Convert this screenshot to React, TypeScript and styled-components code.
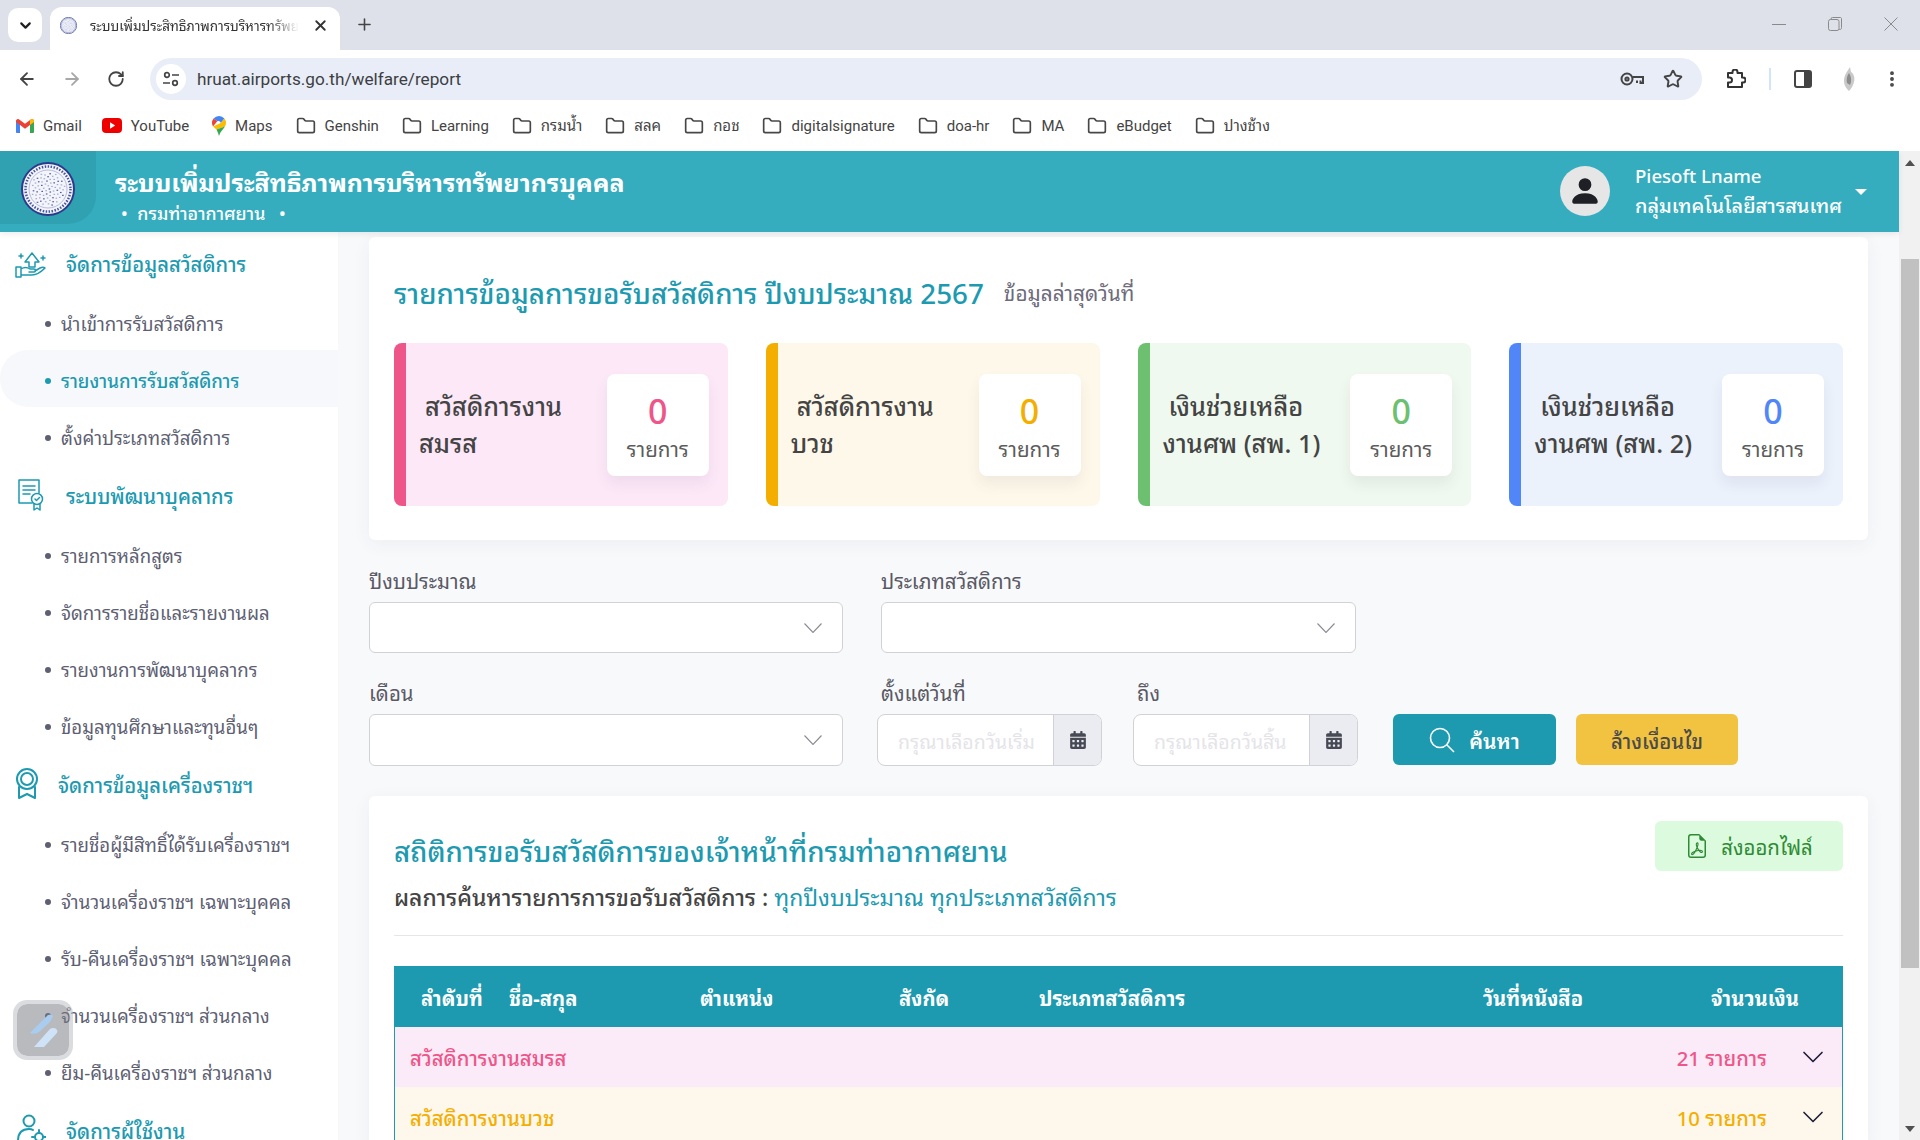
import React from 'react';
import styled, { createGlobalStyle } from 'styled-components';
import { ArrowLeft, ArrowRight, RotateCw, Star, MoreVertical, ChevronDown, X, Plus, Folder } from 'lucide-react';
import { FaCalendarAlt } from 'react-icons/fa';
import { BsPersonFill, BsFileEarmarkPdf } from 'react-icons/bs';

const TEAL = '#1d9ab0';
const FONT = '"Noto Sans", "Noto Sans Thai Looped", "Open Sans", sans-serif';

const GlobalStyle = createGlobalStyle`
  * { box-sizing: border-box; }
  html, body { margin: 0; padding: 0; height: 100%; overflow: hidden; background: #fff; }
  body { font-family: ${FONT}; color: #4b4b4b; }
`;

const bookmarks = [
  { icon: 'gmail', label: 'Gmail' },
  { icon: 'youtube', label: 'YouTube' },
  { icon: 'maps', label: 'Maps' },
  { icon: 'folder', label: 'Genshin' },
  { icon: 'folder', label: 'Learning' },
  { icon: 'folder', label: 'กรมน้ำ' },
  { icon: 'folder', label: 'สลค' },
  { icon: 'folder', label: 'กอช' },
  { icon: 'folder', label: 'digitalsignature' },
  { icon: 'folder', label: 'doa-hr' },
  { icon: 'folder', label: 'MA' },
  { icon: 'folder', label: 'eBudget' },
  { icon: 'folder', label: 'ปางช้าง' },
];

const menu = [
  {
    title: 'จัดการข้อมูลสวัสดิการ',
    icon: 'welfare',
    items: ['นำเข้าการรับสวัสดิการ', 'รายงานการรับสวัสดิการ', 'ตั้งค่าประเภทสวัสดิการ'],
  },
  {
    title: 'ระบบพัฒนาบุคลากร',
    icon: 'course',
    items: ['รายการหลักสูตร', 'จัดการรายชื่อและรายงานผล', 'รายงานการพัฒนาบุคลากร', 'ข้อมูลทุนศึกษาและทุนอื่นๆ'],
  },
  {
    title: 'จัดการข้อมูลเครื่องราชฯ',
    icon: 'medal',
    items: [
      'รายชื่อผู้มีสิทธิ์ได้รับเครื่องราชฯ',
      'จำนวนเครื่องราชฯ เฉพาะบุคคล',
      'รับ-คืนเครื่องราชฯ เฉพาะบุคคล',
      'จำนวนเครื่องราชฯ ส่วนกลาง',
      'ยืม-คืนเครื่องราชฯ ส่วนกลาง',
    ],
  },
  { title: 'จัดการผู้ใช้งาน', icon: 'users', items: [] },
];

const stats = [
  { first: 'สวัสดิการงาน', second: 'สมรส', bar: '#ee5588', bg: '#fde8f8' },
  { first: 'สวัสดิการงาน', second: 'บวช', bar: '#f4ae00', bg: '#fef8ea' },
  { first: 'เงินช่วยเหลือ', second: 'งานศพ (สพ. 1)', bar: '#6cc070', bg: '#eff9ef' },
  { first: 'เงินช่วยเหลือ', second: 'งานศพ (สพ. 2)', bar: '#5086f8', bg: '#ebf2fc' },
];

const columns = ['ลำดับที่', 'ชื่อ-สกุล', 'ตำแหน่ง', 'สังกัด', 'ประเภทสวัสดิการ', 'วันที่หนังสือ', 'จำนวนเงิน'];

const groups = [
  { label: 'สวัสดิการงานสมรส', count: 21, color: '#ee5588', bg: '#fbeaf7' },
  { label: 'สวัสดิการงานบวช', count: 10, color: '#f4ae00', bg: '#fef8ec' },
];

// speckles that stand for the engraving inside the department seal
const speckles = Array.from({ length: 70 }, (_, i) => {
  const angle = i * 2.4;
  const radius = 17 * Math.sqrt((i + 0.5) / 70);
  return { x: 27 + radius * Math.cos(angle), y: 27 + radius * Math.sin(angle), dark: i % 3 === 0 };
});

const Seal: React.FC<{ size: number }> = ({ size }) => (
  <svg width={size} height={size} viewBox="0 0 54 54">
    <circle cx="27" cy="27" r="26" fill="#f4f5fb" stroke="#2c3a8c" strokeWidth="2" />
    <circle cx="27" cy="27" r="22.5" fill="none" stroke="#47549e" strokeWidth="2.5" strokeDasharray="1.5 1.5" />
    <circle cx="27" cy="27" r="19" fill="none" stroke="#9aa2cf" strokeWidth="0.7" />
    {speckles.map((s, i) => (
      <rect key={i} x={s.x - 0.8} y={s.y - 0.6} width="1.6" height="1.2" fill={s.dark ? '#515ca3' : '#a3aad2'} />
    ))}
  </svg>
);

const BookmarkIcon: React.FC<{ kind: string }> = ({ kind }) => {
  if (kind === 'gmail') {
    return (
      <svg width="18" height="14" viewBox="0 0 18 14">
        <path d="M0 2v10.5C0 13.3.7 14 1.5 14H4V6l5 3.8L14 6v8h2.5c.8 0 1.5-.7 1.5-1.5V2c0-1.7-1.9-2.6-3.2-1.6L9 4.8 3.2.4C1.9-.6 0 .3 0 2z" fill="#ea4335" />
        <path d="M0 2v10.5C0 13.3.7 14 1.5 14H4V6L0 3z" fill="#4285f4" />
        <path d="M14 6v8h2.5c.8 0 1.5-.7 1.5-1.5V3z" fill="#34a853" />
        <path d="M14 1l0 5 4-3V2c0-1.7-1.9-2.6-3.2-1.6z" fill="#fbbc04" />
      </svg>
    );
  }
  if (kind === 'youtube') {
    return (
      <svg width="20" height="15" viewBox="0 0 20 15">
        <rect width="20" height="15" rx="4" fill="#ee0000" />
        <path d="M8 4.2l5.2 3.3L8 10.8z" fill="#fff" />
      </svg>
    );
  }
  if (kind === 'maps') {
    return (
      <svg width="14" height="20" viewBox="0 0 14 20">
        <path d="M7 0a7 7 0 0 1 5.4 2.5L8.8 6.9A2.4 2.4 0 0 0 5.3 5.3L1.6 2.6A7 7 0 0 1 7 0z" fill="#4285f4" />
        <path d="M1.6 2.6L5.3 5.3 1 10.4A7 7 0 0 1 0 7a7 7 0 0 1 1.6-4.4z" fill="#ea4335" />
        <path d="M1 10.4L8.8 6.9 12.4 2.5A7 7 0 0 1 14 7c0 1.2-.4 2.4-1 3.4L4.5 13.5z" fill="#fbbc04" />
        <path d="M13 10.4C11.4 13 8 15.6 7 20c-.6-2.6-1.6-4.6-2.5-6.5z" fill="#34a853" />
      </svg>
    );
  }
  return <Folder size={20} color="#474747" strokeWidth={2} />;
};

const MenuIcon: React.FC<{ kind: string }> = ({ kind }) => {
  const stroke = { fill: 'none', stroke: TEAL, strokeWidth: 1.5, strokeLinecap: 'round' as const, strokeLinejoin: 'round' as const };
  if (kind === 'welfare') {
    return (
      <svg width="32" height="32" viewBox="0 0 32 32" {...stroke}>
        <path d="M10 15l7-9 7 9h-4v5h-6v-5z" />
        <path d="M1 20h5v10H1zM6 22c3-2 6-2 9 0h4c2 0 2 3 0 3h-5M6 28h11c4 0 9-3 13-7-1-1-3-1-5 0l-5 3" />
        <path d="M6 7v4M4 9h4M28 9v4M26 11h4" />
      </svg>
    );
  }
  if (kind === 'course') {
    return (
      <svg width="26" height="32" viewBox="0 0 26 32" {...stroke}>
        <path d="M14 24H1V1h20v13" />
        <path d="M5 7h12M5 11h12M5 15h7" />
        <circle cx="19" cy="20" r="5.5" />
        <path d="M16 25v6l3-2 3 2v-6M17 20l1.5 1.5 3-3" />
      </svg>
    );
  }
  if (kind === 'medal') {
    return (
      <svg width="24" height="32" viewBox="0 0 24 32" {...stroke} strokeWidth="2">
        <circle cx="12" cy="11" r="10" />
        <circle cx="12" cy="11" r="6" />
        <path d="M4 19v11l8-4 8 4V19" />
      </svg>
    );
  }
  return (
    <svg width="30" height="32" viewBox="0 0 30 32" {...stroke} strokeWidth="2">
      <circle cx="13" cy="7" r="5.5" />
      <path d="M2 27c0-8 4-12 11-12 2 0 3 .3 4 1" />
      <circle cx="23" cy="23" r="4" />
      <path d="M23 16v3M23 27v3M16 23h3M27 23h3" />
    </svg>
  );
};

const App: React.FC = () => (
  <>
    <GlobalStyle />
    <TabStrip>
      <TabMenu><ChevronDown size={17} strokeWidth={3} color="#1f1f1f" /></TabMenu>
      <Tab>
        <Seal size={17} />
        <TabTitle>ระบบเพิ่มประสิทธิภาพการบริหารทรัพยากรบุคคล</TabTitle>
        <X size={17} strokeWidth={2.6} color="#333" />
      </Tab>
      <NewTab><Plus size={19} strokeWidth={2} color="#444" /></NewTab>
      <WindowControls>
        <svg width="14" height="14" viewBox="0 0 14 14" stroke="#8a8a8a" fill="none"><path d="M0 7.5h14" /></svg>
        <svg width="14" height="14" viewBox="0 0 14 14" stroke="#8a8a8a" fill="none"><rect x="0.5" y="2.5" width="10.5" height="11" rx="2" /><path d="M3 2.5V2a1.5 1.5 0 0 1 1.5-1.5h8a1.5 1.5 0 0 1 1 1v9a1.5 1.5 0 0 1-2.5 1.5" /></svg>
        <svg width="14" height="14" viewBox="0 0 14 14" stroke="#8a8a8a" fill="none"><path d="M.5.5l13 13M13.5.5l-13 13" /></svg>
      </WindowControls>
    </TabStrip>

    <Toolbar>
      <NavIcons>
        <ArrowLeft size={20} strokeWidth={2.2} color="#444" />
        <ArrowRight size={20} strokeWidth={2.2} color="#a8a8a8" />
        <RotateCw size={18} strokeWidth={2.4} color="#444" />
      </NavIcons>
      <Omnibox>
        <SiteInfo>
          <svg width="16" height="16" viewBox="0 0 16 16" fill="none" stroke="#444" strokeWidth="1.7">
            <circle cx="4" cy="4" r="2.3" /><path d="M9 4h7M0 12h7" /><circle cx="12" cy="12" r="2.3" />
          </svg>
        </SiteInfo>
        <Url>hruat.airports.go.th/welfare/report</Url>
        <OmniActions>
          <svg width="24" height="14" viewBox="0 0 24 14" fill="none" stroke="#444" strokeWidth="2">
            <circle cx="7" cy="7" r="5.5" /><circle cx="7" cy="7" r="1.6" /><path d="M12.5 5H23v6h-2.5V8.5M17 8.5V11" />
          </svg>
          <Star size={20} strokeWidth={2.3} color="#444" />
        </OmniActions>
      </Omnibox>
      <ExtIcons>
        <svg width="20" height="20" viewBox="0 0 20 20" fill="none" stroke="#333" strokeWidth="2" strokeLinejoin="round">
          <path d="M2 4h4.5V3a2.5 2.5 0 0 1 5 0v1H16v4.5h1a2.5 2.5 0 0 1 0 5h-1V18H2v-4.5h1.5a2.5 2.5 0 0 0 0-5H2z" />
        </svg>
        <ToolbarDivider />
        <svg width="18" height="18" viewBox="0 0 18 18">
          <rect x="1" y="1" width="16" height="16" rx="2" fill="#fff" stroke="#444" strokeWidth="2" />
          <rect x="10" y="1" width="7" height="16" fill="#444" />
        </svg>
        <ProfilePic width="16" height="26" viewBox="0 0 16 26">
          <path d="M9 1l1 5c3 2 4 6 3 10-1 4-3 7-5 9-2-2-5-5-5-10 0-6 3-9 6-14z" fill="#c9c9c9" />
          <path d="M8 7c2 3 3 7 1 12l-3-2c-1-4 0-7 2-10z" fill="#8c8c8c" />
        </ProfilePic>
        <MenuDots size={20} strokeWidth={2.6} color="#444" />
      </ExtIcons>
    </Toolbar>

    <BookmarkBar>
      {bookmarks.map(b => (
        <Bookmark key={b.label}>
          <BookmarkIcon kind={b.icon} />
          <span>{b.label}</span>
        </Bookmark>
      ))}
    </BookmarkBar>

    <Viewport>
      <AppColumn>
        <AppHeader>
          <LogoBlock><Seal size={54} /></LogoBlock>
          <Brand>
            <BrandTitle>ระบบเพิ่มประสิทธิภาพการบริหารทรัพยากรบุคคล</BrandTitle>
            <BrandSub>
              <span>•</span> กรมท่าอากาศยาน <BrandDot>•</BrandDot>
            </BrandSub>
          </Brand>
          <UserBox>
            <Avatar><BsPersonFill size={34} color="#1e2025" /></Avatar>
            <UserText>
              <UserName>Piesoft Lname</UserName>
              <div>กลุ่มเทคโนโลยีสารสนเทศ</div>
            </UserText>
            <Caret />
          </UserBox>
        </AppHeader>

        <Body>
          <Sidebar>
            {menu.map(section => (
              <React.Fragment key={section.title}>
                <MenuHeading>
                  <MenuIconBox $narrow={section.icon === 'medal'}><MenuIcon kind={section.icon} /></MenuIconBox>
                  <MenuHeadingText>{section.title}</MenuHeadingText>
                </MenuHeading>
                {section.items.map(item => (
                  <MenuItem key={item} $active={item === 'รายงานการรับสวัสดิการ'}>{item}</MenuItem>
                ))}
              </React.Fragment>
            ))}
            <FloatingBadge>
              <svg width="36" height="36" viewBox="0 0 36 36">
                <path d="M5 21L22 4c2-2 5-1 6 0l-3 6-11 10c-3 2-7 2-9 1z" fill="#a9cdf0" />
                <path d="M9 35l16-18c3-2 6-1 7 1 1 1 0 3-1 4L19 35z" fill="#cfe3f8" />
              </svg>
            </FloatingBadge>
          </Sidebar>

          <Main>
            <Card $pad="34px 25px 34px">
              <CardTitleRow>
                <CardTitle>รายการข้อมูลการขอรับสวัสดิการ ปีงบประมาณ 2567</CardTitle>
                <UpdatedAt>ข้อมูลล่าสุดวันที่</UpdatedAt>
              </CardTitleRow>
              <StatGrid>
                {stats.map(s => (
                  <StatCard key={s.second} $bar={s.bar} $bg={s.bg}>
                    <StatLabel>
                      <StatFirstLine>{s.first}</StatFirstLine>
                      <div>{s.second}</div>
                    </StatLabel>
                    <StatBox>
                      <StatValue $color={s.bar}>0</StatValue>
                      <StatUnit>รายการ</StatUnit>
                    </StatBox>
                  </StatCard>
                ))}
              </StatGrid>
            </Card>

            <Filters>
              <FilterRow>
                <Field $width="474px">
                  <FieldLabel>ปีงบประมาณ</FieldLabel>
                  <SelectBox><SelectChevron /></SelectBox>
                </Field>
                <Field $width="475px" $left="38px">
                  <FieldLabel>ประเภทสวัสดิการ</FieldLabel>
                  <SelectBox><SelectChevron /></SelectBox>
                </Field>
              </FilterRow>
              <FilterRow>
                <Field $width="474px">
                  <FieldLabel>เดือน</FieldLabel>
                  <SelectBox $tall><SelectChevron /></SelectBox>
                </Field>
                <Field $width="225px" $left="34px">
                  <DateLabel>ตั้งแต่วันที่</DateLabel>
                  <DateGroup>
                    <DatePlaceholder>กรุณาเลือกวันเริ่ม</DatePlaceholder>
                    <DateAddon><FaCalendarAlt size={18} color="#474a54" /></DateAddon>
                  </DateGroup>
                </Field>
                <Field $width="225px" $left="31px">
                  <DateLabel>ถึง</DateLabel>
                  <DateGroup>
                    <DatePlaceholder>กรุณาเลือกวันสิ้น</DatePlaceholder>
                    <DateAddon><FaCalendarAlt size={18} color="#474a54" /></DateAddon>
                  </DateGroup>
                </Field>
                <SearchButton>
                  <svg width="26" height="26" viewBox="0 0 26 26" fill="none" stroke="#fff" strokeWidth="1.6">
                    <circle cx="11" cy="11" r="9.5" /><path d="M18 18l7 7" />
                  </svg>
                  ค้นหา
                </SearchButton>
                <ClearButton>ล้างเงื่อนไข</ClearButton>
              </FilterRow>
            </Filters>

            <Card $pad="25px 25px 0" $grow>
              <ResultHead>
                <div>
                  <CardTitle>สถิติการขอรับสวัสดิการของเจ้าหน้าที่กรมท่าอากาศยาน</CardTitle>
                  <ResultLine>
                    ผลการค้นหารายการการขอรับสวัสดิการ : <ResultFilter>ทุกปีงบประมาณ ทุกประเภทสวัสดิการ</ResultFilter>
                  </ResultLine>
                </div>
                <ExportButton>
                  <BsFileEarmarkPdf size={24} color="#2e8b35" />
                  ส่งออกไฟล์
                </ExportButton>
              </ResultHead>
              <Divider />
              <TableHead>
                {columns.map(c => <span key={c}>{c}</span>)}
              </TableHead>
              {groups.map(g => (
                <GroupRow key={g.label} $bg={g.bg} $color={g.color}>
                  <span>{g.label}</span>
                  <GroupCount>
                    {g.count} รายการ
                    <ChevronDown size={36} strokeWidth={1.1} color="#1e1e3a" />
                  </GroupCount>
                </GroupRow>
              ))}
            </Card>
          </Main>
        </Body>
      </AppColumn>

      <Scrollbar>
        <ScrollArrow $up />
        <ScrollThumb />
        <ScrollArrow />
      </Scrollbar>
    </Viewport>
  </>
);

export default App;

const TabStrip = styled.div`
  height: 50px;
  background: #dee1e9;
  display: flex;
  align-items: flex-end;
  padding-left: 8px;
`;

const TabMenu = styled.div`
  width: 34px;
  height: 34px;
  margin-bottom: 8px;
  background: #fff;
  border-radius: 10px;
  display: flex;
  align-items: center;
  justify-content: center;
`;

const Tab = styled.div`
  width: 290px;
  height: 43px;
  margin-left: 8px;
  padding: 0 11px 7px 10px;
  background: #fff;
  border-radius: 12px 12px 0 0;
  display: flex;
  align-items: center;
  gap: 13px;
`;

const TabTitle = styled.div`
  flex: 1;
  font-size: 13.5px;
  color: #333;
  white-space: nowrap;
  overflow: hidden;
  -webkit-mask-image: linear-gradient(90deg, #000 85%, transparent);
  mask-image: linear-gradient(90deg, #000 85%, transparent);
`;

const NewTab = styled.div`
  margin: 0 0 16px 15px;
  display: flex;
`;

const WindowControls = styled.div`
  margin-left: auto;
  align-self: flex-start;
  padding: 17px 22px 0 0;
  display: flex;
  gap: 42px;
`;

const Toolbar = styled.div`
  height: 50px;
  background: #fff;
  border-radius: 10px 10px 0 0;
  display: flex;
  align-items: flex-start;
  padding: 8px 18px 0 17px;
`;

const NavIcons = styled.div`
  width: 133px;
  height: 42px;
  display: flex;
  align-items: center;
  gap: 25px;
`;

const Omnibox = styled.div`
  width: 1552px;
  height: 42px;
  background: #e9edf7;
  border-radius: 21px;
  display: flex;
  align-items: center;
  padding: 0 19px 0 6px;
`;

const SiteInfo = styled.div`
  width: 30px;
  height: 30px;
  border-radius: 50%;
  background: #fff;
  display: flex;
  align-items: center;
  justify-content: center;
`;

const Url = styled.div`
  margin-left: 11px;
  font-family: Roboto, sans-serif;
  font-size: 17.2px;
  color: #3c3f43;
`;

const OmniActions = styled.div`
  margin-left: auto;
  display: flex;
  align-items: center;
  gap: 19px;
`;

const ExtIcons = styled.div`
  flex: 1;
  height: 42px;
  display: flex;
  align-items: center;
  padding-left: 24px;
  gap: 22px;
`;

const ToolbarDivider = styled.div`
  width: 2px;
  height: 22px;
  background: #d3e3fd;
  margin: 0 1px;
`;

const ProfilePic = styled.svg`
  margin-left: 7px;
`;

const MenuDots = styled(MoreVertical)`
  margin-left: 3px;
`;

const BookmarkBar = styled.div`
  height: 51px;
  background: #fff;
  padding: 0 0 0 16px;
  display: flex;
  align-items: center;
  gap: 23px;
`;

const Bookmark = styled.div`
  display: flex;
  align-items: center;
  gap: 9px;
  height: 20px;
  line-height: 20px;
  font-family: Roboto, ${FONT};
  font-size: 15px;
  color: #444;
  white-space: nowrap;

  &:first-child {
    margin-right: -3px;
  }
`;

const Viewport = styled.div`
  height: 989px;
  display: flex;
  overflow: hidden;
`;

const AppColumn = styled.div`
  width: 1899px;
  display: flex;
  flex-direction: column;
`;

const AppHeader = styled.header`
  height: 81px;
  flex: none;
  background: #35adbe;
  display: flex;
  align-items: flex-start;
  color: #fff;
  box-shadow: 0 2px 6px rgba(0, 0, 0, 0.08);
  position: relative;
  z-index: 2;
`;

const LogoBlock = styled.div`
  width: 96px;
  height: 73px;
  background: #2fa1b1;
  border-radius: 0 0 28px 0;
  display: flex;
  align-items: center;
  justify-content: center;
  padding-top: 2px;
`;

const Brand = styled.div`
  margin-left: 19px;
  padding-top: 10px;
`;

const BrandTitle = styled.div`
  font-size: 24.9px;
  font-weight: 700;
  line-height: 42px;
  white-space: nowrap;
`;

const BrandSub = styled.div`
  font-size: 17.8px;
  font-weight: 500;
  line-height: 20px;
  padding-left: 2px;
  white-space: pre;
  span { margin: 0 5px 0 4px; }
`;

const BrandDot = styled.span`
  && { margin-left: 9px; }
`;

const UserBox = styled.div`
  margin-left: auto;
  display: flex;
  align-items: center;
  padding: 16px 32px 0 0;
  margin-top: -6px;
`;

const Avatar = styled.div`
  width: 50px;
  height: 50px;
  border-radius: 50%;
  background: #e6e6e6;
  display: flex;
  align-items: center;
  justify-content: center;
`;

const UserText = styled.div`
  margin-left: 25px;
  font-size: 19.9px;
  font-weight: 500;
  line-height: 30px;
  white-space: nowrap;
`;

const UserName = styled.div`
  font-size: 18.6px;
`;

const Caret = styled.div`
  margin: 2px 0 0 13px;
  border-left: 6px solid transparent;
  border-right: 6px solid transparent;
  border-top: 6px solid #fff;
`;

const Body = styled.div`
  flex: 1;
  min-height: 0;
  display: flex;
  background: #f8f9fb;
`;

const Sidebar = styled.nav`
  width: 338px;
  flex: none;
  background: #fff;
  position: relative;
  overflow: hidden;
`;

const MenuHeading = styled.div`
  height: 61px;
  display: flex;
  align-items: center;
  padding-left: 15px;
`;

const MenuIconBox = styled.div<{ $narrow?: boolean }>`
  width: ${p => (p.$narrow ? '24px' : '32px')};
  display: flex;
  justify-content: center;
`;

const MenuHeadingText = styled.div`
  margin-left: 19px;
  font-size: 20.2px;
  font-weight: 500;
  color: ${TEAL};
  white-space: nowrap;
`;

const MenuItem = styled.div<{ $active?: boolean }>`
  height: 57px;
  display: flex;
  align-items: center;
  padding: 2px 0 0 61px;
  position: relative;
  font-size: 18.6px;
  font-weight: ${p => (p.$active ? 500 : 400)};
  color: ${p => (p.$active ? TEAL : '#5e5f73')};
  background: ${p => (p.$active ? '#f7f8fb' : 'transparent')};
  border-radius: 28px 0 0 28px;
  white-space: nowrap;

  &::before {
    content: '';
    position: absolute;
    left: 45px;
    top: 50%;
    width: 6px;
    height: 6px;
    margin-top: -1px;
    border-radius: 50%;
    background: ${p => (p.$active ? TEAL : '#5e5f73')};
  }
`;

const FloatingBadge = styled.div`
  position: absolute;
  left: 13px;
  top: 768px;
  width: 60px;
  height: 60px;
  border-radius: 14px;
  background: rgba(120, 122, 130, 0.52);
  border: 4px solid rgba(190, 192, 198, 0.55);
  background-clip: padding-box;
  display: flex;
  align-items: center;
  justify-content: center;
`;

const Main = styled.main`
  flex: 1;
  min-width: 0;
  padding: 5px 31px 0;
  display: flex;
  flex-direction: column;
`;

const Card = styled.section<{ $pad: string; $grow?: boolean }>`
  background: #fff;
  border-radius: 6px;
  padding: ${p => p.$pad};
  box-shadow: 0 4px 18px rgba(75, 70, 92, 0.06);
  flex: ${p => (p.$grow ? 1 : 'none')};
`;

const CardTitleRow = styled.div`
  display: flex;
  align-items: center;
  height: 44px;
  gap: 20px;
`;

const CardTitle = styled.h2`
  margin: 0;
  font-size: 27.8px;
  font-weight: 500;
  line-height: 48px;
  color: ${TEAL};
  white-space: nowrap;
`;

const UpdatedAt = styled.span`
  margin-bottom: 4px;
  font-size: 20.8px;
  color: #6e6b7b;
`;

const StatGrid = styled.div`
  margin-top: 28px;
  display: grid;
  grid-template-columns: repeat(4, 1fr);
  gap: 38px;
`;

const StatCard = styled.div<{ $bar: string; $bg: string }>`
  height: 163px;
  border-left: 12px solid ${p => p.$bar};
  border-radius: 8px;
  background: ${p => p.$bg};
  display: flex;
  align-items: center;
  justify-content: space-between;
  padding: 0 19px 0 13px;
`;

const StatLabel = styled.div`
  font-size: 25.3px;
  font-weight: 500;
  line-height: 37px;
  color: #444;
  white-space: nowrap;
`;

const StatFirstLine = styled.div`
  padding-left: 6px;
`;

const StatBox = styled.div`
  width: 102px;
  height: 102px;
  background: #fff;
  border-radius: 8px;
  box-shadow: 0 8px 14px rgba(80, 70, 90, 0.08);
  display: flex;
  flex-direction: column;
  align-items: center;
  justify-content: center;
  padding-top: 7px;
`;

const StatValue = styled.div<{ $color: string }>`
  font-size: 34px;
  font-weight: 500;
  line-height: 38px;
  color: ${p => p.$color};
`;

const StatUnit = styled.div`
  margin-top: 4px;
  font-size: 20.6px;
  line-height: 30px;
  color: #5c5c5c;
`;

const Filters = styled.div`
  margin-top: 27px;
  padding-bottom: 30px;
  display: flex;
  flex-direction: column;
  gap: 26px;
`;

const FilterRow = styled.div`
  display: flex;
  align-items: flex-end;
`;

const Field = styled.div<{ $width: string; $left?: string }>`
  width: ${p => p.$width};
  margin-left: ${p => p.$left || 0};
  display: flex;
  flex-direction: column;
`;

const FieldLabel = styled.label`
  font-size: 20.4px;
  line-height: 28px;
  color: #5a5a66;
  margin-bottom: 7px;
`;

const DateLabel = styled(FieldLabel)`
  padding-left: 4px;
`;

const SelectBox = styled.div<{ $tall?: boolean }>`
  height: ${p => (p.$tall ? '52px' : '51px')};
  background: #fff;
  border: 1px solid #d2d2d6;
  border-radius: 6px;
  display: flex;
  align-items: center;
  justify-content: flex-end;
  padding-right: 20px;
`;

const SelectChevron: React.FC = () => (
  <svg width="18" height="10" viewBox="0 0 18 10" fill="none" stroke="#8a8a92" strokeWidth="1.1">
    <path d="M.5.5L9 9.5 17.5.5" />
  </svg>
);

const DateGroup = styled.div`
  height: 52px;
  background: #fff;
  border: 1px solid #d2d2d6;
  border-radius: 8px;
  display: flex;
  overflow: hidden;
`;

const DatePlaceholder = styled.div`
  flex: 1;
  display: flex;
  align-items: center;
  padding-left: 20px;
  font-size: 19.5px;
  color: #e4e4e8;
  white-space: nowrap;
  overflow: hidden;
`;

const DateAddon = styled.div`
  width: 48px;
  flex: none;
  background: #ebecf1;
  border-left: 1px solid #d2d2d6;
  display: flex;
  align-items: center;
  justify-content: center;
`;

const SearchButton = styled.button`
  width: 163px;
  height: 51px;
  margin: 0 0 1px 35px;
  border: 0;
  border-radius: 6px;
  background: ${TEAL};
  color: #fff;
  font-family: ${FONT};
  font-size: 21px;
  font-weight: 600;
  display: flex;
  align-items: center;
  justify-content: center;
  gap: 14px;
`;

const ClearButton = styled.button`
  width: 162px;
  height: 51px;
  margin: 0 0 1px 20px;
  border: 0;
  border-radius: 6px;
  background: #f2c341;
  color: #4a4a4a;
  font-family: ${FONT};
  font-size: 20.4px;
  font-weight: 500;
`;

const ResultHead = styled.div`
  display: flex;
  justify-content: space-between;
  align-items: flex-start;
  height: 114px;
  padding-top: 6px;
`;

const ResultLine = styled.div`
  margin-top: 6px;
  font-size: 22.9px;
  line-height: 34px;
  font-weight: 500;
  color: #444;
  white-space: nowrap;
`;

const ResultFilter = styled.span`
  color: ${TEAL};
  font-weight: 400;
`;

const ExportButton = styled.button`
  width: 188px;
  height: 50px;
  margin-top: -6px;
  border: 0;
  border-radius: 6px;
  background: #dcfadd;
  color: #2e8b35;
  font-family: ${FONT};
  font-size: 20.4px;
  display: flex;
  align-items: center;
  justify-content: center;
  gap: 12px;
`;

const Divider = styled.hr`
  margin: 0;
  border: 0;
  border-top: 1.5px solid #e6e6e6;
`;

const TableHead = styled.div`
  margin-top: 30px;
  height: 61px;
  background: ${TEAL};
  display: grid;
  grid-template-columns: 115px 191px 199px 140px 444px 228px 132px;
  align-items: center;
  color: #fff;
  font-size: 20.2px;
  font-weight: 700;
  white-space: nowrap;

  span:first-child {
    padding-left: 27px;
  }
`;

const GroupRow = styled.div<{ $bg: string; $color: string }>`
  height: 60px;
  background: ${p => p.$bg};
  color: ${p => p.$color};
  border-left: 1px solid ${TEAL};
  border-right: 1px solid ${TEAL};
  padding: 0 11px 0 15px;
  display: flex;
  align-items: center;
  justify-content: space-between;
  font-size: 20.3px;
  font-weight: 500;
`;

const GroupCount = styled.div`
  display: flex;
  align-items: center;
  gap: 28px;
`;

const Scrollbar = styled.div`
  width: 21px;
  flex: none;
  background: #f1f1f1;
  display: flex;
  flex-direction: column;
  align-items: center;
`;

const ScrollArrow = styled.div<{ $up?: boolean }>`
  margin: ${p => (p.$up ? '9px 0 0' : 'auto 0 8px')};
  border-left: 5px solid transparent;
  border-right: 5px solid transparent;
  border-${p => (p.$up ? 'bottom' : 'top')}: 6px solid #505050;
`;

const ScrollThumb = styled.div`
  width: 18px;
  height: 709px;
  margin-top: 93px;
  background: #c1c1c1;
`;
